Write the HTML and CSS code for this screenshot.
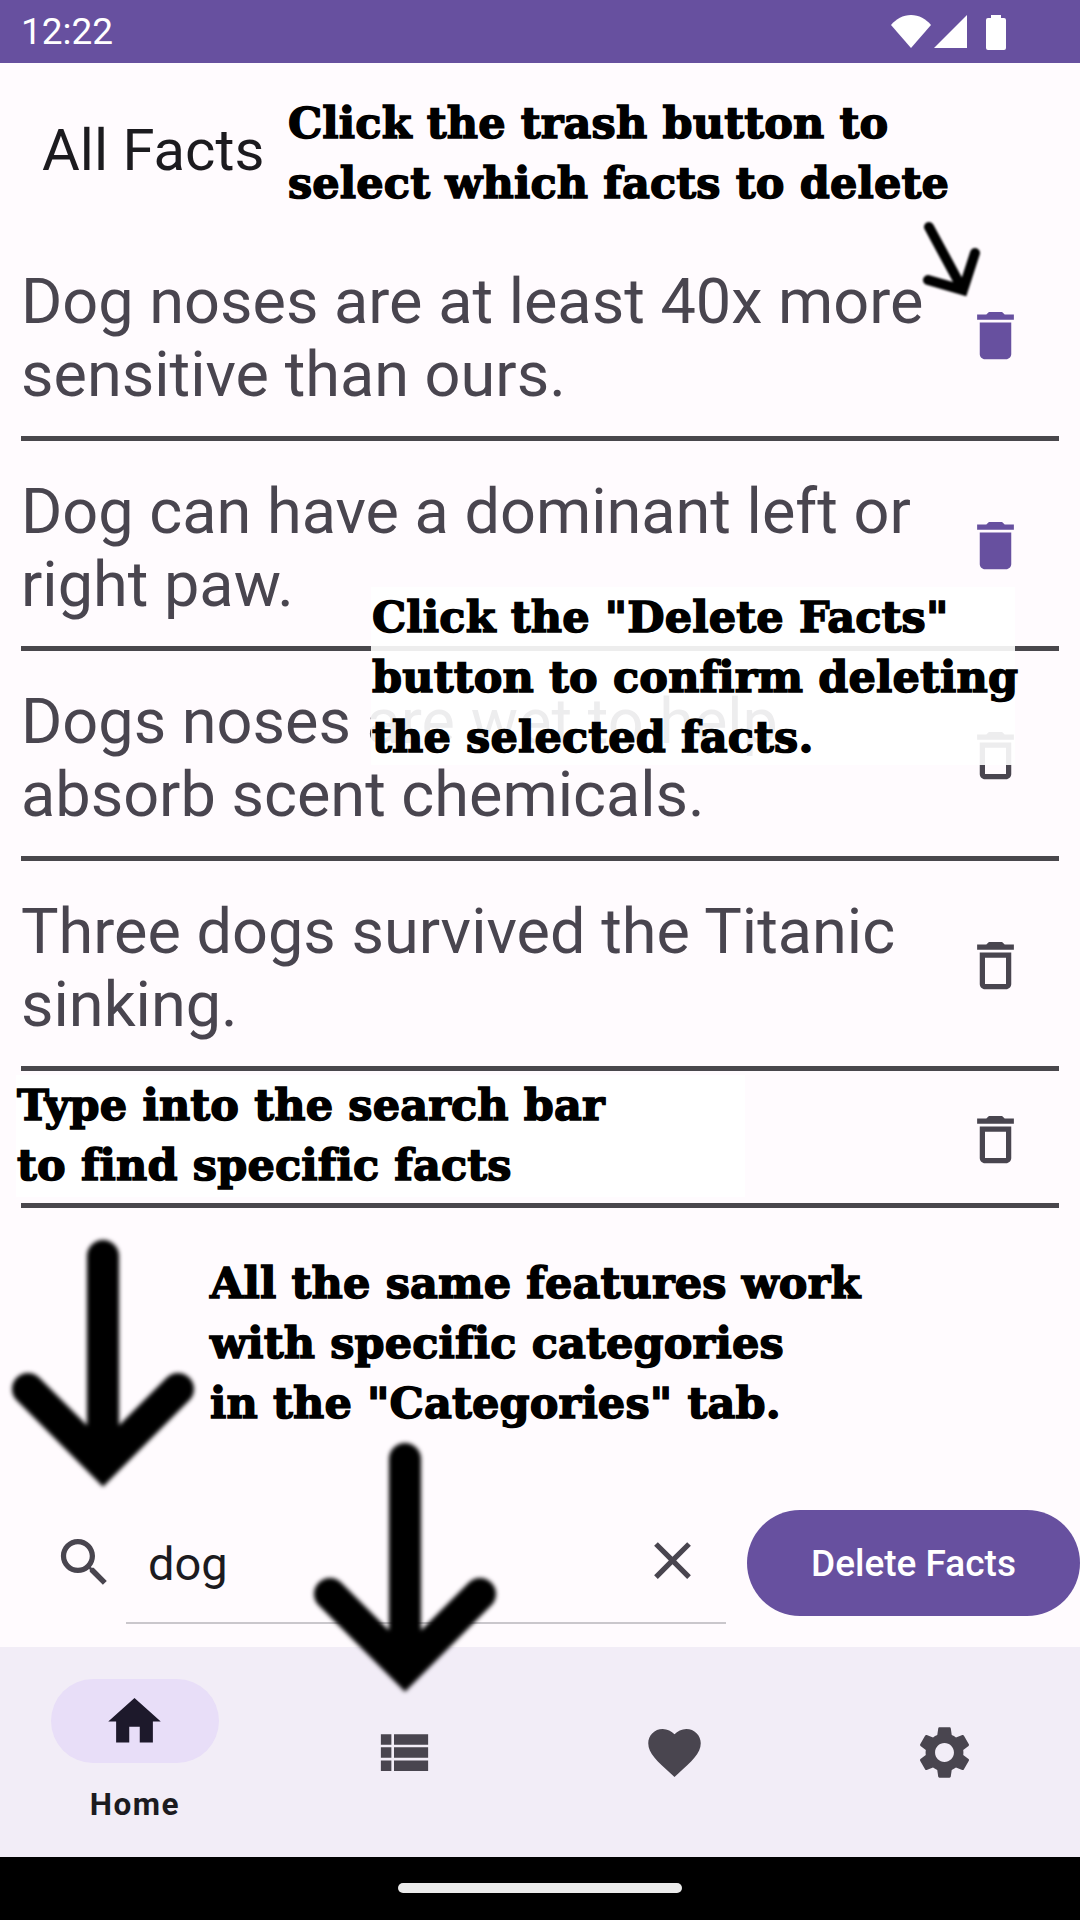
FILE: index.html
```html
<!DOCTYPE html>
<html>
<head>
  <title>All Facts</title>
  <link rel="stylesheet" href="styles.css">
</head>
<body>
  <div class="app">
    <div class="status-bar">
      <span class="status-time">12:22</span>
      <div class="status-icons">
        <svg class="status-wifi" width="40" height="33" viewBox="0 0 40 33"><path d="M0 10C5 4 12 0 20 0s15 4 20 10L20 33z"/></svg>
        <svg class="status-signal" width="33" height="33" viewBox="0 0 33 33"><path d="M0 33L33 0v33z"/></svg>
        <svg class="status-battery" width="20" height="35" viewBox="0 0 20 35"><path d="M5 0h10v3h3a2 2 0 0 1 2 2v28a2 2 0 0 1-2 2H2a2 2 0 0 1-2-2V5a2 2 0 0 1 2-2h3z"/></svg>
      </div>
    </div>

    <div class="page-header">All Facts</div>

    <div class="fact-list">
      <div class="fact-row">
        <div class="fact-text">Dog noses are at least 40x more sensitive than ours.</div>
        <svg class="icon trash selected" viewBox="0 0 24 24"><path d="M6 19c0 1.1.9 2 2 2h8c1.1 0 2-.9 2-2V7H6v12zM19 4h-3.5l-1-1h-5l-1 1H5v2h14V4z"/></svg>
      </div>
      <div class="fact-row">
        <div class="fact-text">Dog can have a dominant left or right paw.</div>
        <svg class="icon trash selected" viewBox="0 0 24 24"><path d="M6 19c0 1.1.9 2 2 2h8c1.1 0 2-.9 2-2V7H6v12zM19 4h-3.5l-1-1h-5l-1 1H5v2h14V4z"/></svg>
      </div>
      <div class="fact-row">
        <div class="fact-text">Dogs noses are wet to help absorb scent chemicals.</div>
        <svg class="icon trash" viewBox="0 0 24 24"><path d="M6 19c0 1.1.9 2 2 2h8c1.1 0 2-.9 2-2V7H6v12zM8 9h8v10H8V9zm7.5-5l-1-1h-5l-1 1H5v2h14V4z"/></svg>
      </div>
      <div class="fact-row">
        <div class="fact-text">Three dogs survived the Titanic sinking.</div>
        <svg class="icon trash" viewBox="0 0 24 24"><path d="M6 19c0 1.1.9 2 2 2h8c1.1 0 2-.9 2-2V7H6v12zM8 9h8v10H8V9zm7.5-5l-1-1h-5l-1 1H5v2h14V4z"/></svg>
      </div>
      <div class="fact-row">
        <div class="fact-text">&nbsp;</div>
        <svg class="icon trash" viewBox="0 0 24 24"><path d="M6 19c0 1.1.9 2 2 2h8c1.1 0 2-.9 2-2V7H6v12zM8 9h8v10H8V9zm7.5-5l-1-1h-5l-1 1H5v2h14V4z"/></svg>
      </div>
    </div>

    <div class="spacer"></div>

    <div class="search-bar">
      <svg class="icon search-icon" viewBox="0 0 24 24"><path d="M15.5 14h-.79l-.28-.27C15.41 12.59 16 11.11 16 9.5 16 5.91 13.09 3 9.5 3S3 5.91 3 9.5 5.91 16 9.5 16c1.61 0 3.09-.59 4.23-1.57l.27.28v.79l5 4.99L20.49 19l-4.99-5zm-6 0C7.01 14 5 11.99 5 9.5S7.01 5 9.5 5 14 7.01 14 9.5 11.99 14 9.5 14z"/></svg>
      <div class="search-field">
        <span class="search-value">dog</span>
        <svg class="icon clear-icon" viewBox="0 0 24 24"><path d="M19 6.41L17.59 5 12 10.59 6.41 5 5 6.41 10.59 12 5 17.59 6.41 19 12 13.41 17.59 19 19 17.59 13.41 12z"/></svg>
      </div>
      <div class="delete-button">Delete Facts</div>
    </div>

    <div class="nav-bar">
      <div class="nav-item active">
        <div class="nav-pill">
          <svg class="icon" viewBox="0 0 24 24"><path d="M10 20v-6h4v6h5v-8h3L12 3 2 12h3v8z"/></svg>
        </div>
        <div class="nav-label">Home</div>
      </div>
      <div class="nav-item">
        <svg class="icon" viewBox="0 0 24 24"><path d="M3 14h4v-4H3v4zm0 5h4v-4H3v4zM3 9h4V5H3v4zm5 5h13v-4H8v4zm0 5h13v-4H8v4zM8 5v4h13V5H8z"/></svg>
      </div>
      <div class="nav-item">
        <svg class="icon" viewBox="0 0 24 24"><path d="M12 21.35l-1.45-1.32C5.4 15.36 2 12.28 2 8.5 2 5.42 4.42 3 7.5 3c1.74 0 3.41.81 4.5 2.09C13.09 3.81 14.76 3 16.5 3 19.58 3 22 5.42 22 8.5c0 3.78-3.4 6.86-8.55 11.54L12 21.35z"/></svg>
      </div>
      <div class="nav-item">
        <svg class="icon" viewBox="0 0 24 24"><path d="M19.14 12.94c.04-.3.06-.61.06-.94 0-.32-.02-.64-.07-.94l2.03-1.58c.18-.14.23-.41.12-.61l-1.92-3.32c-.12-.22-.37-.29-.59-.22l-2.39.96c-.5-.38-1.03-.7-1.62-.94l-.36-2.54c-.04-.24-.24-.41-.48-.41h-3.84c-.24 0-.43.17-.47.41l-.36 2.54c-.59.24-1.13.57-1.62.94l-2.39-.96c-.22-.08-.47 0-.59.22L2.74 8.87c-.12.21-.08.47.12.61l2.03 1.58c-.05.3-.09.63-.09.94s.02.64.07.94l-2.03 1.58c-.18.14-.23.41-.12.61l1.92 3.32c.12.22.37.29.59.22l2.39-.96c.5.38 1.03.7 1.62.94l.36 2.54c.05.24.24.41.48.41h3.84c.24 0 .44-.17.47-.41l.36-2.54c.59-.24 1.13-.56 1.62-.94l2.39.96c.22.08.47 0 .59-.22l1.92-3.32c.12-.22.07-.47-.12-.61l-2.01-1.58zM12 15.6c-1.98 0-3.6-1.62-3.6-3.6s1.62-3.6 3.6-3.6 3.6 1.62 3.6 3.6-1.62 3.6-3.6 3.6z"/></svg>
      </div>
    </div>

    <div class="gesture-bar"><div class="gesture-handle"></div></div>

    <!-- tutorial notes drawn on top of the screenshot -->
    <div class="note note-trash">Click the trash button to<br>select which facts to delete</div>
    <div class="note note-confirm">Click the "Delete Facts"<br>button to confirm deleting<br>the selected facts.</div>
    <div class="note note-search">Type into the search bar<br>to find specific facts</div>
    <div class="note note-tabs">All the same features work<br>with specific categories<br>in the "Categories" tab.</div>

    <svg class="arrow arrow-trash" width="70" height="90" viewBox="0 0 70 90"><path d="M9 9L43 72M55 35L43 72L8 62"/></svg>
    <svg class="arrow arrow-search" width="200" height="270" viewBox="0 0 200 270"><path d="M100 26V234M25 159L100 234L175 159"/></svg>
    <svg class="arrow arrow-tabs" width="200" height="270" viewBox="0 0 200 270"><path d="M100 21V231M25 156L100 231L175 156"/></svg>
  </div>
</body>
</html>
```

FILE: styles.css
```css
* {
  box-sizing: border-box;
}

body {
  margin: 0;
  background-color: #fffbfe;
  font-family: Roboto, sans-serif;
}

.app {
  position: relative;
  display: flex;
  flex-direction: column;
  width: 1080px;
  height: 1920px;
  overflow: hidden;
}

.icon {
  display: block;
  width: 63px;
  height: 63px;
  flex: none;
  fill: #49454f;
}

/* status bar */
.status-bar {
  display: flex;
  align-items: center;
  justify-content: space-between;
  height: 63px;
  padding: 0 74px 0 21px;
  background-color: #67509f;
  color: white;
}

.status-time {
  font-size: 37px;
}

.status-icons {
  display: flex;
  align-items: flex-start;
  margin-top: 1px;
}

.status-icons svg {
  display: block;
  fill: white;
}

.status-signal {
  margin-left: 3px;
}

.status-battery {
  margin-left: 19px;
}

/* header */
.page-header {
  height: 168px;
  padding: 55px 0 0 42px;
  font-size: 58px;
  line-height: 64px;
  color: #1c1b1f;
}

/* facts */
.fact-list {
  padding: 0 21px;
}

.fact-row {
  display: flex;
  align-items: center;
  padding: 34px 32px 25px 0;
  border-bottom: 5px solid #49474c;
}

.fact-text {
  flex: 1;
  font-size: 63px;
  line-height: 73px;
  color: #49454f;
}

.trash {
  margin-bottom: 5px;
}

.trash.selected {
  fill: #67509f;
}

.spacer {
  flex: 1;
}

/* search */
.search-bar {
  display: flex;
  align-items: flex-start;
  height: 147px;
  padding-left: 53px;
}

.search-icon {
  margin-top: 31px;
  margin-right: 10px;
}

.search-field {
  display: flex;
  align-items: flex-start;
  justify-content: space-between;
  width: 600px;
  height: 124px;
  padding: 0 22px;
  border-bottom: 2px solid #cac7cc;
}

.search-value {
  margin-top: 34px;
  font-size: 47px;
  line-height: 60px;
  color: #1c1b1f;
}

.clear-icon {
  margin-top: 29px;
}

.delete-button {
  width: 333px;
  height: 106px;
  margin: 10px 0 0 21px;
  border-radius: 53px;
  background-color: #67509f;
  color: white;
  font-size: 37px;
  font-weight: 500;
  line-height: 108px;
  text-align: center;
}

/* bottom navigation */
.nav-bar {
  display: grid;
  grid-template-columns: repeat(4, 1fr);
  height: 210px;
  padding-right: 1px;
  background-color: #f2edf7;
}

.nav-item {
  display: flex;
  flex-direction: column;
  align-items: center;
  justify-content: center;
}

.nav-item.active {
  justify-content: flex-start;
  padding-top: 32px;
}

.nav-pill {
  display: flex;
  align-items: center;
  justify-content: center;
  width: 168px;
  height: 84px;
  border-radius: 42px;
  background-color: #e8def8;
}

.nav-pill .icon {
  fill: #1d192b;
}

.nav-label {
  margin-top: 23px;
  font-size: 31.5px;
  font-weight: 700;
  line-height: 38px;
  letter-spacing: 1.5px;
  color: #1c1b1f;
}

.gesture-bar {
  display: flex;
  justify-content: center;
  height: 63px;
  padding-top: 26px;
  background-color: black;
}

.gesture-handle {
  width: 284px;
  height: 10px;
  border-radius: 5px;
  background-color: #ebebeb;
}

/* tutorial notes */
.note {
  position: absolute;
  font-family: "DejaVu Serif", serif;
  font-size: 43px;
  font-weight: 700;
  line-height: 60px;
  letter-spacing: 0.15px;
  color: black;
  white-space: nowrap;
  -webkit-text-stroke: 1.5px black;
}

.note-trash {
  left: 288px;
  top: 93px;
}

.note-confirm {
  left: 371px;
  top: 587px;
  width: 644px;
  height: 178px;
  padding-left: 1px;
  background-color: rgba(255, 255, 255, 0.9);
}

.note-search {
  left: 16px;
  top: 1075px;
  width: 729px;
  height: 122px;
  padding-left: 1px;
  background-color: white;
}

.note-tabs {
  left: 210px;
  top: 1253px;
}

/* hand drawn arrows */
.arrow {
  position: absolute;
  fill: none;
  stroke: black;
  stroke-linecap: round;
  stroke-linejoin: miter;
}

.arrow-trash {
  left: 920px;
  top: 218px;
  stroke-width: 10px;
  filter: blur(1px);
}

.arrow-search {
  left: 3px;
  top: 1230px;
  stroke-width: 32px;
  filter: blur(2px);
}

.arrow-tabs {
  left: 305px;
  top: 1438px;
  stroke-width: 32px;
  filter: blur(2px);
}
```
